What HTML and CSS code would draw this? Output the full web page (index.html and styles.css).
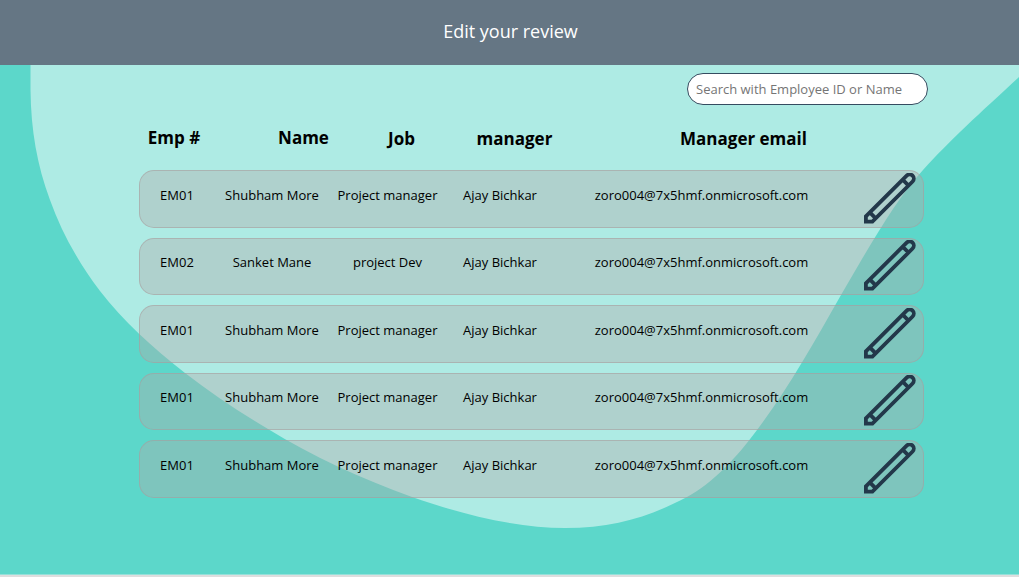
FILE: index.html
```html
<!DOCTYPE html>
<html lang="en">
<head>
<meta charset="utf-8">
<title>Edit your review</title>
<link rel="stylesheet" href="styles.css">
</head>
<body>
<svg class="backdrop" viewBox="0 0 1019 577" aria-hidden="true">
  <path d="M30.500 65V90C31 130 37 165 50 200C61 231 78 262 100 291C123 321 152 347 185 373C211 393 239 412 268 429C312 456 362 479 412 497C466 516 520 528 565 528C615 528 651 516 687 497C713 483 737 457 757 430C788 389 812 346 841 295L862 259C884 222 902 193 923 170C950 140 980 113 1019 77V65Z"/>
</svg>
<header class="topbar"><h1>Edit your review</h1></header>
<main class="content">
  <div class="search-row"><input class="search" type="text" placeholder="Search with Employee ID or Name"></div>
  <div class="headings">
    <span class="h-id">Emp #</span><span class="h-name">Name</span><span>Job</span><span>manager</span><span>Manager email</span>
  </div>
  <section class="list">
    <article class="row"><span>EM01</span><span>Shubham More</span><span>Project manager</span><span>Ajay Bichkar</span><span>zoro004@7x5hmf.onmicrosoft.com</span><svg class="pencil" viewBox="0 0 52 52"><use href="#pencil"/></svg></article>
    <article class="row"><span>EM02</span><span>Sanket Mane</span><span>project Dev</span><span>Ajay Bichkar</span><span>zoro004@7x5hmf.onmicrosoft.com</span><svg class="pencil" viewBox="0 0 52 52"><use href="#pencil"/></svg></article>
    <article class="row"><span>EM01</span><span>Shubham More</span><span>Project manager</span><span>Ajay Bichkar</span><span>zoro004@7x5hmf.onmicrosoft.com</span><svg class="pencil" viewBox="0 0 52 52"><use href="#pencil"/></svg></article>
    <article class="row"><span>EM01</span><span>Shubham More</span><span>Project manager</span><span>Ajay Bichkar</span><span>zoro004@7x5hmf.onmicrosoft.com</span><svg class="pencil" viewBox="0 0 52 52"><use href="#pencil"/></svg></article>
    <article class="row"><span>EM01</span><span>Shubham More</span><span>Project manager</span><span>Ajay Bichkar</span><span>zoro004@7x5hmf.onmicrosoft.com</span><svg class="pencil" viewBox="0 0 52 52"><use href="#pencil"/></svg></article>
  </section>
</main>
<footer class="bottom-line"></footer>
<svg class="symbols" aria-hidden="true">
  <symbol id="pencil" viewBox="0 0 52 52">
    <path d="M1.900 48.600V43.400L42.700 2.650A4.150 4.150 0 0 1 48.600 8.500L8.400 48.600ZM6 39.600L12 45.600M38.600 6.700L44.600 12.700"/>
  </symbol>
</svg>
</body>
</html>
```
FILE: styles.css
```css
* { box-sizing: border-box; }
body {
  margin: 0;
  width: 1019px;
  height: 577px;
  overflow: hidden;
  display: flex;
  flex-direction: column;
  background: #5cd7ca;
  color: #000;
  font-family: "Open Sans", sans-serif;
}
.backdrop { position: absolute; inset: 0; z-index: -1; width: 1019px; height: 577px; fill: #aeebe4; }
.topbar { height: 65px; background: #657684; color: #fff; display: flex; justify-content: center; padding: 19px 0 0 2px; }
.topbar h1 { margin: 0; font-size: 18px; font-weight: 400; line-height: 25px; }
.content { flex: 1; padding: 8px 95px 0 139px; }
.search-row { display: flex; justify-content: flex-end; margin-right: -4px; }
.search { width: 241px; height: 32px; padding: 0 8px; border: 1px solid #354c60; border-radius: 16px; background: #fff; font: 13px "Open Sans", sans-serif; }
.search::placeholder { color: #757575; opacity: 1; }
.headings { height: 65px; display: grid; grid-template-columns: 70px 170px 45px 181px 277px; padding-top: 22px; font-size: 17px; font-weight: 700; line-height: 24px; white-space: nowrap; }
.headings span { text-align: center; }
.h-id, .h-name { margin-top: -1px; }
.headings .h-name { padding-left: 19px; }
.list { display: grid; gap: 10px; grid-template-rows: 58px 57px 58px 57px 58px; }
.row { display: grid; grid-template-columns: 74px 116px 115px 110px 293px 1fr; padding-top: 14px; border: 1px solid rgba(166, 156, 156, .55); border-radius: 15px; background: rgba(178, 171, 169, .4); font-size: 13px; line-height: 20px; text-align: center; white-space: nowrap; position: relative; }
.row:nth-child(even) { padding-top: 13px; }
.pencil { position: absolute; right: 6px; top: 2px; width: 54px; height: 52px; fill: none; stroke: #23384a; stroke-width: 3.8; }
.row:nth-child(even) .pencil { top: 1px; }
.symbols { display: none; }
.bottom-line { height: 3px; border-top: 1px solid #95e0d9; background: #dedede; }
```
